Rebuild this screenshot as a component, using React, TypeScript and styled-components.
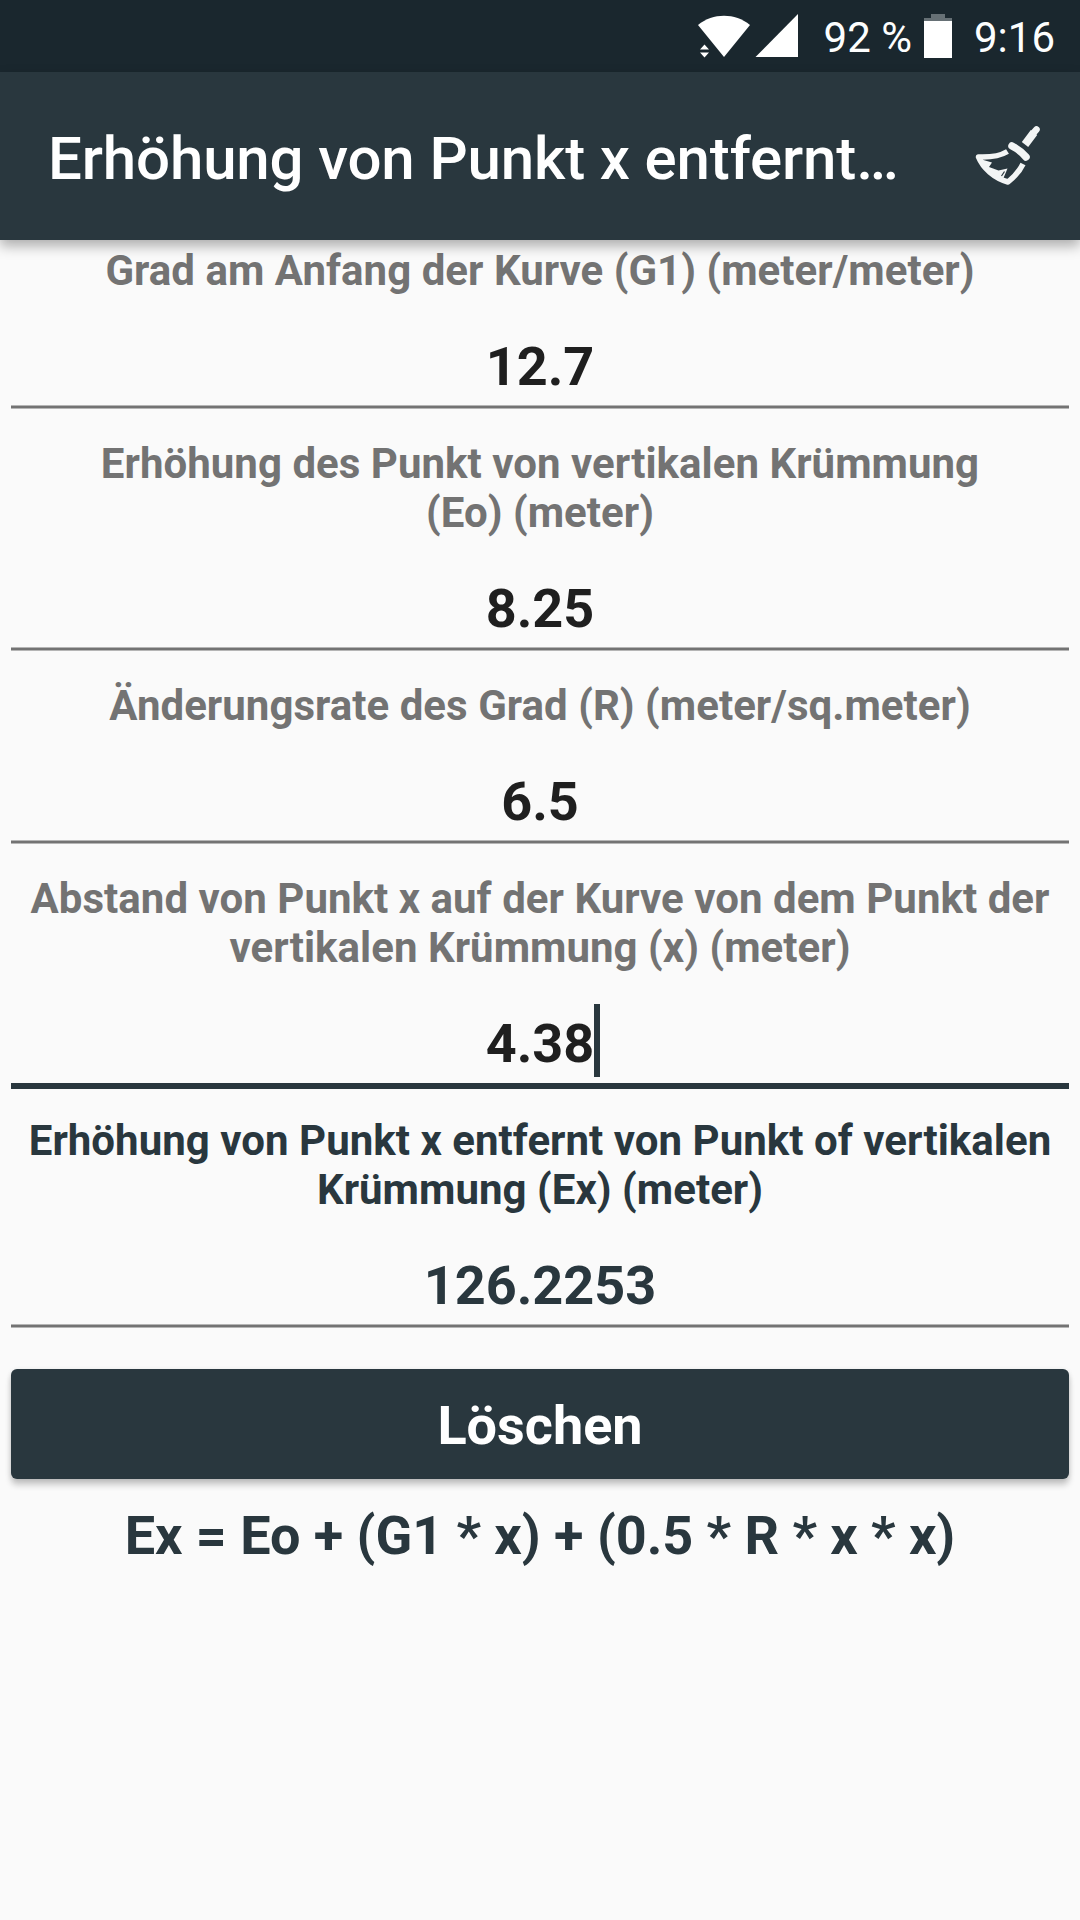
import React from "react";
import styled, { createGlobalStyle } from "styled-components";

const PRIMARY = "#29373e";

const GlobalStyle = createGlobalStyle`
  * { box-sizing: border-box; }
  body { margin: 0; background: #fafafa; font-family: Roboto, sans-serif; }
`;

const Screen = styled.div`
  display: flex;
  flex-direction: column;
  width: 1080px;
  height: 1920px;
  overflow: hidden;
  background: #fafafa;
`;

const StatusBar = styled.header`
  display: flex;
  align-items: center;
  justify-content: flex-end;
  flex: none;
  height: 72px;
  padding-right: 25px;
  background: #1a272e;
  color: #fdfefe;
  font-size: 42px;
  line-height: 49px;
  white-space: pre;
`;

const StatusIcons = styled.svg`
  flex: none;
  width: 110px;
  height: 72px;
  margin-right: 24px;
`;

const StatusText = styled.span`
  padding-top: 3px;
`;

const Battery = styled.svg`
  flex: none;
  width: 28px;
  height: 72px;
  margin: 0 22px 0 12px;
`;

const AppBar = styled.div`
  display: flex;
  align-items: center;
  justify-content: space-between;
  flex: none;
  height: 168px;
  padding: 0 36px 0 48px;
  background: ${PRIMARY};
  color: #fff;
  box-shadow: 0 6px 12px rgba(0, 0, 0, 0.31);
  z-index: 1;
`;

const Title = styled.h1`
  margin: 0;
  padding-top: 6px;
  font-size: 60px;
  font-weight: 500;
  letter-spacing: -0.14px;
  line-height: 72px;
  white-space: nowrap;
`;

const Broom = styled.svg`
  flex: none;
  width: 72px;
  height: 72px;
`;

const Form = styled.main`
  display: flex;
  flex-direction: column;
  padding: 6px 11px 0;
`;

const Field = styled.section`
  display: flex;
  flex-direction: column;
  align-items: center;
`;

const Label = styled.label<{ $strong?: boolean }>`
  color: ${(p) => (p.$strong ? PRIMARY : "#737373")};
  font-size: 42px;
  font-weight: 700;
  letter-spacing: 0.03px;
  line-height: 49px;
  text-align: center;
  white-space: pre-line;
`;

const Value = styled.div<{ $strong?: boolean }>`
  position: relative;
  height: 63px;
  margin-top: 40px;
  color: ${(p) => (p.$strong ? PRIMARY : "#1f1f1f")};
  font-size: 54px;
  font-weight: 700;
  line-height: 63px;
`;

const Caret = styled.span`
  position: absolute;
  top: -8px;
  left: 100%;
  width: 6px;
  height: 73px;
  background: ${PRIMARY};
`;

const Underline = styled.div<{ $focused?: boolean }>`
  align-self: stretch;
  height: ${(p) => (p.$focused ? 6 : 4)}px;
  margin: ${(p) => (p.$focused ? "8px 0 27px" : "7px 0 30px")};
  background: ${(p) =>
    p.$focused
      ? PRIMARY
      : "linear-gradient(#b5b5b5 1px, #737373 1px, #737373 3px, #b5b5b5 3px)"};
`;

const ClearButton = styled.button`
  height: 110px;
  margin-top: 11px;
  padding: 2px 0 0;
  border: 0;
  border-radius: 6px;
  background: ${PRIMARY};
  box-shadow: 0 6px 6px rgba(0, 0, 0, 0.2), 0 1px 5px rgba(0, 0, 0, 0.1);
  color: #fff;
  font: 700 54px/63px Roboto, sans-serif;
`;

const Formula = styled.p`
  margin: 25px 0 0;
  color: ${PRIMARY};
  font-size: 54px;
  font-weight: 700;
  letter-spacing: -0.04px;
  line-height: 63px;
  text-align: center;
`;

type FieldData = { label: string; value: string; focused?: boolean; result?: boolean };

const fields: FieldData[] = [
  { label: "Grad am Anfang der Kurve (G1) (meter/meter)", value: "12.7" },
  { label: "Erhöhung des Punkt von vertikalen Krümmung\n(Eo) (meter)", value: "8.25" },
  { label: "Änderungsrate des Grad (R) (meter/sq.meter)", value: "6.5" },
  {
    label: "Abstand von Punkt x auf der Kurve von dem Punkt der\nvertikalen Krümmung (x) (meter)",
    value: "4.38",
    focused: true,
  },
  {
    label: "Erhöhung von Punkt x entfernt von Punkt of vertikalen\nKrümmung (Ex) (meter)",
    value: "126.2253",
    result: true,
  },
];

export default function App() {
  return (
    <>
      <GlobalStyle />
      <Screen>
        <StatusBar>
          <StatusIcons viewBox="0 0 110 72" fill="#fff">
            <path d="M8 25C23 12.700 45 12.700 60 25L34 57Z" />
            <path d="M10 49.500L14.500 44.500L19 49.500ZM10 52.500H19L14.500 57.500Z" />
            <path d="M108 14V57H65.500Z" />
          </StatusIcons>
          <StatusText>92 %</StatusText>
          <Battery viewBox="0 0 28 72">
            <path d="M7 14H21V18H28V22H0V18H7Z" fill="#667075" />
            <path d="M0 21H28V58H0Z" fill="#fff" />
          </Battery>
          <StatusText>9:16</StatusText>
        </StatusBar>
        <AppBar>
          <Title>Erhöhung von Punkt x entfernt…</Title>
          <Broom viewBox="0 0 72 72" fill="none" stroke="#f3f5f5" strokeLinejoin="round">
            <path d="M53 24.500L62 12.500" strokeWidth="8" />
            <path d="M60.500 14L64.500 9.500" strokeWidth="6.500" strokeLinecap="round" />
            <path d="M40 26Q48 30 54 37" strokeWidth="7.500" strokeLinecap="round" />
            <path
              d="M35.500 31.500C28 36 18 37.500 6.500 37C11 48 22 58 36 62C42 57 48 50.500 51 44"
              strokeWidth="5.500"
            />
            <path
              d="M8 39L20 42.500L17 47L26.500 50.500L35.500 48.500L31.500 58L25 56L15 49Z"
              fill="#f3f5f5"
              stroke="none"
            />
            <path d="M32.500 51.500L29.500 56" stroke={PRIMARY} strokeWidth="1.200" />
          </Broom>
        </AppBar>
        <Form>
          {fields.map((f) => (
            <Field key={f.label}>
              <Label $strong={f.result}>{f.label}</Label>
              <Value $strong={f.result}>
                {f.value}
                {f.focused && <Caret />}
              </Value>
              <Underline $focused={f.focused} />
            </Field>
          ))}
          <ClearButton>Löschen</ClearButton>
          <Formula>Ex = Eo + (G1 * x) + (0.5 * R * x * x)</Formula>
        </Form>
      </Screen>
    </>
  );
}
